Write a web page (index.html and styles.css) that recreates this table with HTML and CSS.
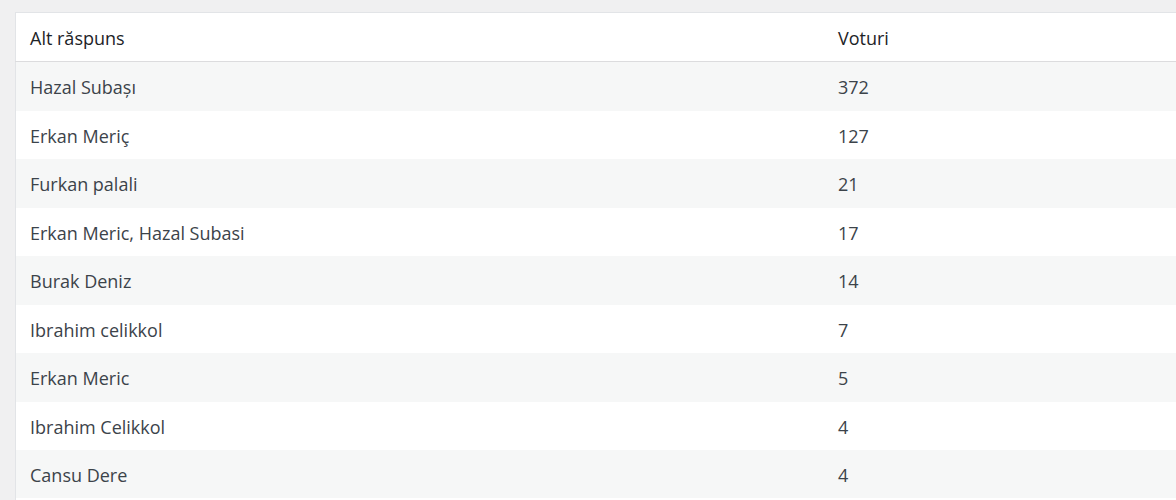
FILE: index.html
```html
<!DOCTYPE html>
<html lang="ro">
<head>
    <meta charset="UTF-8">
    <meta name="viewport" content="width=device-width, initial-scale=1.0">
    <title>Voturi</title>
    <link rel="stylesheet" href="styles.css">
</head>
<body>
    <div class="results">
        <table class="votes-table">
            <thead>
                <tr>
                    <th class="col-answer">Alt răspuns</th>
                    <th class="col-votes">Voturi</th>
                </tr>
            </thead>
            <tbody>
                <tr><td>Hazal Subaşı</td><td>372</td></tr>
                <tr><td>Erkan Meriç</td><td>127</td></tr>
                <tr><td>Furkan palali</td><td>21</td></tr>
                <tr><td>Erkan Meric, Hazal Subasi</td><td>17</td></tr>
                <tr><td>Burak Deniz</td><td>14</td></tr>
                <tr><td>Ibrahim celikkol</td><td>7</td></tr>
                <tr><td>Erkan Meric</td><td>5</td></tr>
                <tr><td>Ibrahim Celikkol</td><td>4</td></tr>
                <tr><td>Cansu Dere</td><td>4</td></tr>
            </tbody>
        </table>
        <div class="results-foot"></div>
    </div>
</body>
</html>
```

FILE: styles.css
```css
html, body {
    overflow: hidden;
}
body {
    margin: 0;
    background: #f0f0f1;
    font-family: 'Open Sans', 'Noto Sans', sans-serif;
    font-size: 18px;
}
.results {
    padding: 12px 0 0 15px;
}
.votes-table {
    width: 1240px;
    border-collapse: collapse;
    background: white;
    border: 1px solid #e2e4e7;
    border-bottom: none;
}
.votes-table th,
.votes-table td {
    text-align: left;
    padding: 13px 14px 11px;
    line-height: 24.44px;
}
.votes-table th {
    font-weight: normal;
    color: #1d2327;
    border-bottom: 1px solid #dcdcde;
}
.votes-table td {
    color: #3c434a;
}
.col-answer {
    width: 780px;
}
.votes-table tbody tr:nth-child(odd) {
    background: #f6f7f7;
}
.results-foot {
    width: 1240px;
    height: 40px;
    background: white;
    border-left: 1px solid #e2e4e7;
}
```
